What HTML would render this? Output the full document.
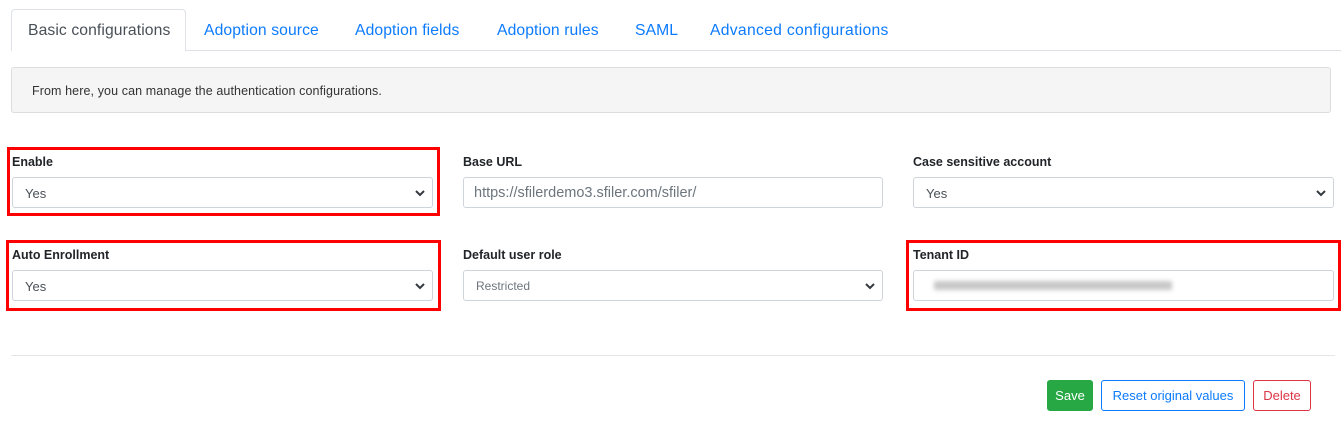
<!DOCTYPE html>
<html><head><style>
body{margin:0;width:1341px;height:429px;background:#fff;font-family:"Liberation Sans",sans-serif;position:relative;overflow:hidden;color:#212529}
.a{position:absolute}
.tab{position:absolute;top:22px;font-size:15.7px;color:#0d7bfd;letter-spacing:0.1px}
.lbl{position:absolute;font-size:12.5px;font-weight:bold;color:#212529}
.in{position:absolute;height:29px;border:1px solid #ced4da;border-radius:3px;box-sizing:border-box;background:#fff;font-size:13px;color:#495057;line-height:29px;padding-left:12px}
.chev{position:absolute;right:6px;top:9px}
.red{position:absolute;border:3px solid #f00;box-sizing:border-box}
.btn{position:absolute;top:380px;height:31px;box-sizing:border-box;border-radius:3px;font-size:13px;line-height:30px;text-align:center}
</style></head><body>
<div class="a" style="left:11px;top:50px;width:1330px;height:1px;background:#dee2e6"></div>
<div class="a" style="left:11px;top:9px;width:175px;height:42px;border:1px solid #dee2e6;border-bottom:none;border-radius:4px 4px 0 0;box-sizing:border-box;background:#fff"></div>
<div class="tab" style="left:28px;color:#495057">Basic configurations</div>
<div class="tab" style="left:204px">Adoption source</div>
<div class="tab" style="left:355px">Adoption fields</div>
<div class="tab" style="left:497px">Adoption rules</div>
<div class="tab" style="left:635px">SAML</div>
<div class="tab" style="left:710px;letter-spacing:0.3px">Advanced configurations</div>

<div class="a" style="left:11px;top:67px;width:1320px;height:46px;background:#f5f5f5;border:1px solid #ddd;border-radius:3px;box-sizing:border-box"></div>
<div class="a" style="left:32px;top:84px;font-size:12.5px;color:#333;letter-spacing:0.1px">From here, you can manage the authentication configurations.</div>

<div class="red" style="left:7px;top:147px;width:433px;height:69px"></div>
<div class="red" style="left:6px;top:240px;width:435px;height:71px"></div>
<div class="red" style="left:906px;top:240px;width:435px;height:71px"></div>

<div class="lbl" style="left:12px;top:155px">Enable</div>
<div class="in" style="left:12px;top:177px;width:421px;height:31px;line-height:31px">Yes<svg class="chev" width="12" height="12" viewBox="0 0 12 12"><path d="M2 4l4 4 4-4" fill="none" stroke="#343a40" stroke-width="2"/></svg></div>
<div class="lbl" style="left:463px;top:155px">Base URL</div>
<div class="in" style="left:463px;top:177px;width:420px;height:31px;line-height:31px;font-size:14.5px;color:#6c757d;padding-left:10px">https://sfilerdemo3.sfiler.com/sfiler/</div>
<div class="lbl" style="left:913px;top:155px">Case sensitive account</div>
<div class="in" style="left:913px;top:177px;width:421px;height:31px;line-height:31px">Yes<svg class="chev" width="12" height="12" viewBox="0 0 12 12"><path d="M2 4l4 4 4-4" fill="none" stroke="#343a40" stroke-width="2"/></svg></div>

<div class="lbl" style="left:12px;top:248px">Auto Enrollment</div>
<div class="in" style="left:12px;top:270px;width:421px;height:31px;line-height:31px">Yes<svg class="chev" width="12" height="12" viewBox="0 0 12 12"><path d="M2 4l4 4 4-4" fill="none" stroke="#343a40" stroke-width="2"/></svg></div>
<div class="lbl" style="left:463px;top:248px">Default user role</div>
<div class="in" style="left:463px;top:270px;width:420px;height:31px;line-height:31px;font-size:12px;color:#6c757d">Restricted<svg class="chev" width="12" height="12" viewBox="0 0 12 12"><path d="M2 4l4 4 4-4" fill="none" stroke="#343a40" stroke-width="2"/></svg></div>
<div class="lbl" style="left:913px;top:248px">Tenant ID</div>
<div class="in" style="left:913px;top:270px;width:421px;height:31px"><span style="display:inline-block;margin-top:10px;margin-left:8px;width:238px;height:9px;background:#c8c8c8;filter:blur(2px);vertical-align:top"></span></div>

<div class="a" style="left:11px;top:355px;width:1324px;height:1px;background:#e5e5e5"></div>
<div class="btn" style="left:1047px;width:46px;background:#28a745;color:#fff;border:1px solid #28a745">Save</div>
<div class="btn" style="left:1101px;width:144px;border:1px solid #0d7bfd;color:#0d7bfd">Reset original values</div>
<div class="btn" style="left:1253px;width:58px;border:1px solid #dc3545;color:#dc3545">Delete</div>
</body></html>
